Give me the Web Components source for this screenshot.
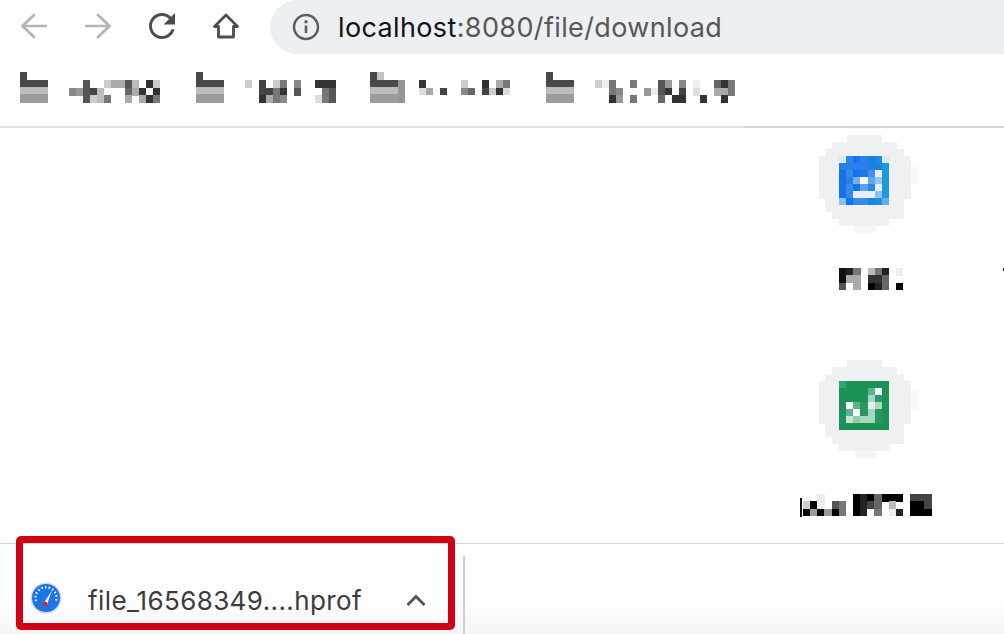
<!DOCTYPE html>
<html>
<head>
<meta charset="utf-8">
<title>Download</title>
<style>
    html, body { margin: 0; height: 100%; background: #fff; overflow: hidden; }
    body { display: flex; flex-direction: column; font-family: Inter, "Liberation Sans", sans-serif; }
</style>
</head>
<body>
<browser-toolbar url-host="localhost" url-rest=":8080/file/download"></browser-toolbar>

<bookmarks-bar>
    <bookmark-item rows="f.5ffcaa5bf3c/8954b..f6a3f3/..5cb7..a.a37"></bookmark-item>
    <bookmark-item style="margin-left:36px" rows="c.4.c7.8..333/..4473.5..f75/..3a78....d75"></bookmark-item>
    <bookmark-item style="margin-left:34px" variant="wide" rows="3.....cf.3.a7/da.4..86.4c3d"></bookmark-item>
    <bookmark-item style="margin-left:36px" rows="ce7ff7...59.8.e..637/ff78f..9e53.4.d..aa7/.f39.7..f6f33..3..3."></bookmark-item>
</bookmarks-bar>

<page-content>
    <app-tile tone="blue" offset="20" gap="35" rows="127.b72.e/1aa.336../5fa.026.0"></app-tile>
    <app-tile tone="green" offset="-16" gap="36" bar rows="..e....0206000.444/c0e.57.0246.b..004/090907.02.7fe2.000" style="margin-top:70px"></app-tile>
</page-content>

<download-shelf file="file_16568349....hprof"></download-shelf>

<script>
// hex digit = grey level, "." = nothing. Rows split by "/", a row with # is space separated colours
class PixelMosaic extends HTMLElement {
    connectedCallback() {
        const cw = parseFloat(this.getAttribute('cw')) || 7;
        const ch = parseFloat(this.getAttribute('ch')) || 7.67;
        const rows = (this.getAttribute('rows') || '').split('/').map(r => {
            if (r.includes('#')) return r.trim().split(' ');
            return [...r];
        });
        const cols = Math.max(...rows.map(r => r.length));
        const w = cols * cw;
        const h = rows.length * ch;
        let rects = '';
        rows.forEach((row, y) => row.forEach((c, x) => {
            if (c === '.') return;
            const fill = c.length === 1 ? `#${c}${c}${c}` : c;
            rects += `<rect x="${x * cw}" y="${y * ch}" width="${cw + .2}" height="${ch + .2}" fill="${fill}"/>`;
        }));
        this.attachShadow({ mode: 'open' });
        this.shadowRoot.innerHTML = `
            <style>
                :host { display: block; width: ${w}px; height: ${h}px; line-height: 0; }
            </style>
            <svg width="${w}" height="${h}" viewBox="0 0 ${w} ${h}" shape-rendering="crispEdges">${rects}</svg>
        `;
    }
}
customElements.define('pixel-mosaic', PixelMosaic);

class BrowserToolbar extends HTMLElement {
    connectedCallback() {
        this.attachShadow({ mode: 'open' });
        this.shadowRoot.innerHTML = `
            <style>
                :host { display: flex; height: 54px; flex: none; padding-left: 21px; align-items: stretch; }
                .nav { display: flex; gap: 38px; align-items: center; padding-bottom: 3px; }
                svg { display: block; width: 26px; height: 26px; }
                .omni {
                    flex: 1;
                    margin-left: 31px;
                    background: #edf0f2;
                    border-radius: 27px 0 0 27px;
                    display: flex;
                    align-items: center;
                    padding-left: 22px;
                    gap: 18px;
                }
                .info { width: 28px; height: 28px; }
                .url { font-size: 27px; letter-spacing: .37px; color: #555759; white-space: nowrap; }
                .url b { font-weight: 400; color: #121314; }
            </style>
            <div class="nav">
                <svg viewBox="0 0 26 26" fill="none" stroke="#b2b4b6" stroke-width="2.7" stroke-linecap="round" stroke-linejoin="round">
                    <path d="M25 13H2M13 2 1.5 13 13 24"/>
                </svg>
                <svg viewBox="0 0 26 26" fill="none" stroke="#b2b4b6" stroke-width="2.7" stroke-linecap="round" stroke-linejoin="round">
                    <path d="M1 13h23M13 2l11.5 11L13 24"/>
                </svg>
                <svg viewBox="4 4 16 16" fill="#4a4c4e">
                    <path d="M17.65 6.35C16.2 4.9 14.21 4 12 4c-4.42 0-7.99 3.58-7.99 8s3.57 8 7.99 8c3.73 0 6.84-2.55 7.73-6h-1.9c-.82 2.33-3.22 4.2-5.83 4.2-3.42 0-6.2-2.78-6.2-6.2s2.78-6.2 6.2-6.2c1.7 0 3.2.7 4.32 1.88L13 11h7V4l-2.35 2.35z"/>
                </svg>
                <svg viewBox="0 0 26 26" fill="none" stroke="#4a4c4e" stroke-width="2.8" stroke-linejoin="round">
                    <path d="M13 2 1.5 13.500H5.500V24H20.500V13.500H24.500Z"/>
                </svg>
            </div>
            <div class="omni">
                <svg class="info" viewBox="0 0 28 28" fill="none">
                    <circle cx="14" cy="14" r="12" stroke="#5c5e60" stroke-width="2.500"/>
                    <path d="M14 12.500v7.500" stroke="#5c5e60" stroke-width="2.600"/>
                    <circle cx="14" cy="8.700" r="1.700" fill="#5c5e60"/>
                </svg>
                <span class="url"><b>${this.getAttribute('url-host')}</b>${this.getAttribute('url-rest')}</span>
            </div>
        `;
    }
}
customElements.define('browser-toolbar', BrowserToolbar);

class BookmarksBar extends HTMLElement {
    connectedCallback() {
        this.attachShadow({ mode: 'open' });
        this.shadowRoot.innerHTML = `
            <style>
                :host {
                    display: flex;
                    flex: none;
                    height: 74px;
                    box-sizing: border-box;
                    padding: 18px 0 0 20px;
                    align-items: flex-start;
                    background: linear-gradient(#e2e2e2, #e2e2e2) 0 100% / 743px 2px no-repeat,
                                linear-gradient(#d6d6d6, #d6d6d6) 0 100% / 100% 2px no-repeat;
                }
            </style>
            <slot></slot>
        `;
    }
}
customElements.define('bookmarks-bar', BookmarksBar);

class BookmarkItem extends HTMLElement {
    connectedCallback() {
        const wide = this.getAttribute('variant') === 'wide';
        this.attachShadow({ mode: 'open' });
        this.shadowRoot.innerHTML = `
            <style>
                :host { display: flex; align-items: flex-start; gap: ${wide ? 14 : 21}px; height: 31px; }
                svg { display: block; }
                pixel-mosaic { margin-top: 8px; }
            </style>
            <svg width="${wide ? 35 : 28}" height="31" viewBox="0 0 ${wide ? 35 : 28} 31" shape-rendering="crispEdges">
                <rect width="7" height="8" fill="#48494b"/>
                ${wide ? '<rect x="7" width="7" height="8" fill="#c4c4c4"/><rect x="28" y="8" width="7" height="23" fill="#969696"/>' : ''}
                <rect y="8" width="28" height="7" fill="#48494b"/>
                <rect y="15" width="28" height="7" fill="#bcbcbc"/>
                <rect y="22" width="28" height="9" fill="#9c9c9c"/>
            </svg>
            <pixel-mosaic rows="${this.getAttribute('rows')}"></pixel-mosaic>
        `;
    }
}
customElements.define('bookmark-item', BookmarkItem);

class PageContent extends HTMLElement {
    connectedCallback() {
        this.attachShadow({ mode: 'open' });
        this.shadowRoot.innerHTML = `
            <style>
                :host {
                    display: flex;
                    flex-direction: column;
                    flex: 1;
                    min-height: 0;
                    box-sizing: border-box;
                    padding: 7px 0 0 819px;
                    position: relative;
                }
                .tick { position: absolute; right: 0; top: 140px; width: 1px; height: 3px; background: #222; }
            </style>
            <slot></slot>
            <div class="tick"></div>
        `;
    }
}
customElements.define('page-content', PageContent);

const TILES = {
    blue: '#dfe8f0 #2a86e8 #1a73e8 #2a80ea #1a7fe0 #1a8cdc #dde6ea/' +
          '#2a80ea #2a80ea #2a7fea #2a7fea #1a82e0 #1a82e0 #1a9adc/' +
          '#1273ee #3a8cea #1273ee #1a78e8 #4a90e0 #e8f0f5 #1a9adc/' +
          '#1273ee #2a7ce8 #7ab0ea #f5f8fa #60a8ee #90c4f2 #1a9adc/' +
          '#1273ee #3a88e0 #1273ee #60a0ea #2a88e6 #e8f0f5 #1a9adc/' +
          '#1273ee #3a88e8 #e8eef5 #e8eef5 #e8eef5 #90c0ee #1a9adc/' +
          '#8cc0f5 #1273ee #3a88ec #3a88ec #1a88e0 #1a90dc #60aef0',
    green: '#3aa070 #1b9356 #1b9356 #1b9356 #1b9356 #1b9356 #1b9356/' +
           '#1b9356 #1b9356 #1b9356 #1b9356 #5cb48a #ffffff #1b9356/' +
           '#1b9356 #1b9356 #1b9356 #1b9356 #a5d8c0 #2c9a66 #1b9356/' +
           '#1b9356 #ffffff #5cb48a #2a9660 #e0efe8 #a8d8c0 #1b9356/' +
           '#1b9356 #5cb48a #ffffff #2a9660 #a5d8c0 #2a9660 #1b9356/' +
           '#1b9356 #c8e4d6 #8fcfae #a5d8c0 #a5d8c0 #2a9660 #1b9356/' +
           '#1b9356 #1b9356 #1b9356 #1b9356 #1b9356 #1b9356 #1b9356'
};

class AppTile extends HTMLElement {
    connectedCallback() {
        const offset = this.getAttribute('offset') || 0;
        const gap = this.getAttribute('gap') || 35;
        const bar = this.hasAttribute('bar');
        this.attachShadow({ mode: 'open' });
        this.shadowRoot.innerHTML = `
            <style>
                :host { display: flex; flex-direction: column; flex: none; width: 99px; }
                .circle { position: relative; width: 99px; height: 98px; }
                .circle svg { display: block; }
                .tile { position: absolute; left: 20px; top: 21px; }
                .label { display: flex; margin: ${gap}px 0 0 ${offset}px; width: max-content; position: relative; }
                .bar { position: absolute; left: -3px; top: 4px; width: 2px; height: 19px; background: #111; }
            </style>
            <div class="circle">
                <svg width="99" height="98" viewBox="0 0 99 98" shape-rendering="crispEdges">
                    <rect x="92" y="30" width="7" height="20" fill="#f8f9fa"/>
                    <rect x="36" y="91" width="21" height="7" fill="#f5f6f7"/>
                    <path fill="#eff0f2" d="M28 0H63V7H78V14H85V21H92V64H85V84H70V91H20V84H13V77H6V64H0V21H6V14H13V7H28Z"/>
                </svg>
                <pixel-mosaic class="tile" cw="7.14" ch="7" rows="${TILES[this.getAttribute('tone')]}"></pixel-mosaic>
            </div>
            <div class="label">
                ${bar ? '<div class="bar"></div>' : ''}
                <pixel-mosaic cw="7.14" ch="7.33" rows="${this.getAttribute('rows')}"></pixel-mosaic>
            </div>
        `;
    }
}
customElements.define('app-tile', AppTile);

class DownloadShelf extends HTMLElement {
    connectedCallback() {
        this.attachShadow({ mode: 'open' });
        this.shadowRoot.innerHTML = `
            <style>
                :host {
                    display: flex;
                    flex: none;
                    height: 91px;
                    box-sizing: border-box;
                    border-top: 1px solid #d2d2d2;
                    padding-top: 12px;
                    position: relative;
                    background: linear-gradient(#fff 60%, #f5f5f5);
                }
                .item {
                    display: flex;
                    align-items: center;
                    box-sizing: border-box;
                    width: 463px;
                    padding: 6px 37px 0 30px;
                }
                .gauge { width: 32px; height: 32px; flex: none; display: block; }
                .name { margin: 4px 0 0 26px; font-size: 26px; letter-spacing: .4px; color: #3a3c3e; white-space: nowrap; }
                .chevron { margin: 4px 0 0 auto; width: 20px; height: 14px; display: block; flex: none; }
                .sep { width: 2px; background: #d0d0d0; align-self: stretch; }
                .mark {
                    position: absolute;
                    left: 16px;
                    top: -8px;
                    width: 439px;
                    height: 94px;
                    box-sizing: border-box;
                    border: 7px solid #cf0014;
                    border-radius: 5px;
                }
            </style>
            <div class="item">
                <svg class="gauge" viewBox="0 0 32 32">
                    <circle cx="16" cy="16" r="15.500" fill="#d4d8dc"/>
                    <circle cx="16" cy="16" r="14" fill="#1c74e6"/>
                    <path d="M6 19A10.500 10.500 0 1 1 26 19" fill="none" stroke="#fff" stroke-width="2.200" stroke-dasharray="1.500 2.200"/>
                    <path d="M13.800 21 22 8.500 17 22.500Z" fill="#fff"/>
                    <circle cx="15" cy="22" r="2.400" fill="#d8262c"/>
                </svg>
                <span class="name">${this.getAttribute('file')}</span>
                <svg class="chevron" viewBox="0 0 20 14" fill="none" stroke="#55585b" stroke-width="3">
                    <path d="M1.500 12 10 3.500 18.500 12"/>
                </svg>
            </div>
            <div class="sep"></div>
            <div class="mark"></div>
        `;
    }
}
customElements.define('download-shelf', DownloadShelf);
</script>
</body>
</html>
